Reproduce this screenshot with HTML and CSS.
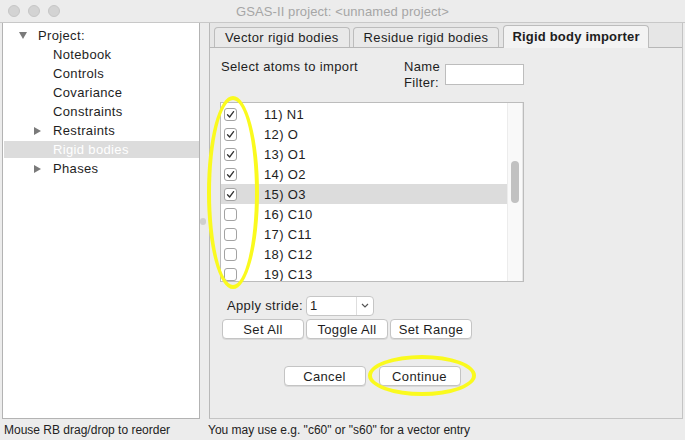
FILE: index.html
```html
<!DOCTYPE html>
<html>
<head>
<meta charset="utf-8">
<title>GSAS-II</title>
<link rel="stylesheet" href="styles.css">
</head>
<body>
<div class="window">
  <div class="titlebar">
    <div class="lights"><span class="light"></span><span class="light"></span><span class="light"></span></div>
    <div class="title">GSAS-II project: &lt;unnamed project&gt;</div>
    <div></div>
  </div>
  <div class="main">
    <div class="tree">
      <div class="node l0"><span class="twisty"><svg width="8" height="7" viewBox="0 0 8 7"><polygon points="0,0 8,0 4,7" fill="#7a7a7a"/></svg></span>Project:</div>
      <div class="node l1"><span class="twisty"></span>Notebook</div>
      <div class="node l1"><span class="twisty"></span>Controls</div>
      <div class="node l1"><span class="twisty"></span>Covariance</div>
      <div class="node l1"><span class="twisty"></span>Constraints</div>
      <div class="node l1"><span class="twisty"><svg width="7" height="8" viewBox="0 0 7 8"><polygon points="0,0 7,4 0,8" fill="#7a7a7a"/></svg></span>Restraints</div>
      <div class="node l1 selected"><span class="twisty"></span>Rigid bodies</div>
      <div class="node l1"><span class="twisty"><svg width="7" height="8" viewBox="0 0 7 8"><polygon points="0,0 7,4 0,8" fill="#7a7a7a"/></svg></span>Phases</div>
    </div>
    <div class="sash"><span class="sash-dot"></span></div>
    <div class="panel">
      <div class="tabs">
        <div class="tab">Vector rigid bodies</div>
        <div class="tab">Residue rigid bodies</div>
        <div class="tab active">Rigid body importer</div>
      </div>
      <div class="page">
        <div class="col">
          <div class="header">
            <div class="prompt">Select atoms to import</div>
            <div class="filter">
              <div class="filter-label">Name<br>Filter:</div>
              <div class="input"></div>
            </div>
          </div>
          <div class="list">
            <div class="rows">
              <div class="row"><span class="cb"><svg width="11" height="11" viewBox="0 0 11 11"><path d="M2.5 5.8 L4.6 8 L8.6 2.6" fill="none" stroke="#333" stroke-width="1.3" stroke-linecap="round" stroke-linejoin="round"/></svg></span><span class="lbl">11) N1</span></div>
              <div class="row"><span class="cb"><svg width="11" height="11" viewBox="0 0 11 11"><path d="M2.5 5.8 L4.6 8 L8.6 2.6" fill="none" stroke="#333" stroke-width="1.3" stroke-linecap="round" stroke-linejoin="round"/></svg></span><span class="lbl">12) O</span></div>
              <div class="row"><span class="cb"><svg width="11" height="11" viewBox="0 0 11 11"><path d="M2.5 5.8 L4.6 8 L8.6 2.6" fill="none" stroke="#333" stroke-width="1.3" stroke-linecap="round" stroke-linejoin="round"/></svg></span><span class="lbl">13) O1</span></div>
              <div class="row"><span class="cb"><svg width="11" height="11" viewBox="0 0 11 11"><path d="M2.5 5.8 L4.6 8 L8.6 2.6" fill="none" stroke="#333" stroke-width="1.3" stroke-linecap="round" stroke-linejoin="round"/></svg></span><span class="lbl">14) O2</span></div>
              <div class="row sel"><span class="cb"><svg width="11" height="11" viewBox="0 0 11 11"><path d="M2.5 5.8 L4.6 8 L8.6 2.6" fill="none" stroke="#333" stroke-width="1.3" stroke-linecap="round" stroke-linejoin="round"/></svg></span><span class="lbl">15) O3</span></div>
              <div class="row"><span class="cb"></span><span class="lbl">16) C10</span></div>
              <div class="row"><span class="cb"></span><span class="lbl">17) C11</span></div>
              <div class="row"><span class="cb"></span><span class="lbl">18) C12</span></div>
              <div class="row"><span class="cb"></span><span class="lbl">19) C13</span></div>
            </div>
            <div class="scrollbar"><div class="thumb"></div></div>
          </div>
          <div class="stride">
            <span>Apply stride:</span>
            <div class="combo"><span class="combo-val">1</span><span class="combo-arrow"><svg width="8" height="5" viewBox="0 0 8 5"><path d="M1 1 L4 4 L7 1" fill="none" stroke="#555" stroke-width="1.2"/></svg></span></div>
          </div>
          <div class="btnrow">
            <button class="btn">Set All</button>
            <button class="btn">Toggle All</button>
            <button class="btn">Set Range</button>
          </div>
          <div class="actions">
            <button class="btn">Cancel</button>
            <button class="btn">Continue</button>
          </div>
        </div>
      </div>
    </div>
  </div>
  <div class="status">
    <span class="field1">Mouse RB drag/drop to reorder</span>
    <span>You may use e.g. "c60" or "s60" for a vector entry</span>
  </div>
  <div class="mark mark-a"></div>
  <div class="mark mark-b"></div>
</div>
</body>
</html>
```
FILE: styles.css
```css
* { box-sizing: border-box; }
html, body { margin: 0; padding: 0; }
body {
  width: 685px;
  height: 440px;
  overflow: hidden;
  background: #ececec;
  font-family: "Liberation Sans", Arial, sans-serif;
  font-size: 13px;
  letter-spacing: 0.35px;
  color: #1e1e1e;
}
.window {
  position: relative;
  width: 685px;
  height: 440px;
  display: flex;
  flex-direction: column;
}
.titlebar {
  height: 23px;
  flex: none;
  display: grid;
  grid-template-columns: 1fr auto 1fr;
  align-items: center;
  background: #ececec;
  border-bottom: 1px solid #c8c8c8;
}
.lights { display: flex; gap: 8px; padding-left: 8px; }
.light {
  width: 12px; height: 12px; border-radius: 50%;
  background: #d3d3d3; border: 1px solid #c6c6c6;
}
.title { color: #a6a6a6; font-size: 13px; letter-spacing: 0.1px; }

.main {
  flex: 1;
  display: flex;
  min-height: 0;
}
.tree {
  width: 198px;
  margin-left: 2px;
  background: #fff;
  border: 1px solid #b3b3b3;
  border-top: none;
  padding-top: 4px;
  display: flex;
  flex-direction: column;
  gap: 2px;
}
.node {
  height: 17px;
  display: flex;
  align-items: center;
  margin-left: 1px;
  white-space: nowrap;
}
.node.l0 { padding-left: 15px; }
.node.l1 { padding-left: 30px; }
.twisty {
  width: 19px;
  display: flex;
  align-items: center;
  justify-content: flex-start;
}
.node.selected { background: #dcdcdc; color: #fff; }

.sash {
  width: 9px;
  display: flex;
  align-items: center;
  justify-content: flex-start;
}
.sash-dot {
  width: 6px; height: 7px;
  border-radius: 3px;
  background: #cfcfcf;
}
.panel {
  flex: 1;
  margin-right: 2px;
  border-left: 1px solid #b9b9b9;
  border-right: 1px solid #c4c4c4;
  border-bottom: 1px solid #c4c4c4;
  display: flex;
  flex-direction: column;
}
.tabs {
  height: 25px;
  flex: none;
  display: flex;
  align-items: flex-end;
  padding-left: 4px;
  gap: 3px;
  background: #e6e6e6;
  border-bottom: 1px solid #b7b7b7;
}
.tab {
  height: 20px;
  padding: 0 10px;
  display: flex;
  align-items: center;
  border: 1px solid #bcbcbc;
  border-bottom: none;
  border-radius: 4px 4px 0 0;
  background: #e9e9e9;
  color: #1e1e1e;
  white-space: nowrap;
}
.tab.active {
  height: 23px;
  margin-bottom: -1px;
  background: #f3f3f3;
  font-weight: bold;
  letter-spacing: 0.2px;
  padding: 0 8px 1px;
  margin-left: 1px;
}
.page {
  flex: 1;
  padding: 11px 0 0 10px;
}
.col { width: 304px; display: flex; flex-direction: column; }
.header {
  display: grid;
  grid-template-columns: 184px auto;
  align-items: start;
  height: 43px;
}
.prompt { line-height: 16px; padding-left: 1px; }
.filter { display: flex; gap: 5px; align-items: flex-start; }
.filter-label { line-height: 16px; }
.input {
  width: 79px; height: 21px;
  margin-top: 5px;
  background: #fff;
  border: 1px solid #bdbdbd;
}
.list {
  height: 180px;
  display: flex;
  background: #fff;
  border: 1px solid #bcbcbc;
  overflow: hidden;
}
.rows {
  flex: 1;
  padding-top: 1px;
  display: flex;
  flex-direction: column;
}
.row {
  height: 20px;
  flex: none;
  display: flex;
  align-items: center;
  padding-left: 3px;
}
.row.sel { background: #dcdcdc; }
.cb {
  width: 13px; height: 13px;
  flex: none;
  border: 1px solid #a3a3a3;
  border-radius: 3px;
  background: #fff;
  display: flex;
  align-items: center;
  justify-content: center;
}
.lbl { margin-left: 27px; }
.scrollbar {
  width: 16px;
  flex: none;
  background: #f9f9f9;
  border-left: 1px solid #ececec;
  border-right: 1px solid #e6e6e6;
  padding: 58px 0 0 3px;
}
.thumb {
  width: 8px; height: 42px;
  border-radius: 4px;
  background: #c1c1c1;
}
.stride {
  margin-top: 13px;
  padding-left: 7px;
  display: flex;
  align-items: center;
  gap: 3px;
  height: 21px;
}
.combo {
  width: 68px; height: 20px;
  display: flex;
  background: #fff;
  border: 1px solid #c6c6c6;
  border-radius: 4px;
}
.combo-val { flex: 1; padding-left: 3px; line-height: 18px; border-right: 1px solid #dedede; }
.combo-arrow { width: 16px; display: flex; align-items: center; justify-content: center; }
.btnrow {
  margin-top: 3px;
  padding-left: 2px;
  display: flex;
  gap: 2px;
}
.btn {
  width: 82px; height: 20px;
  padding: 0;
  font-family: "Liberation Sans", Arial, sans-serif;
  font-size: 13px;
  letter-spacing: 0.35px;
  color: #1e1e1e;
  background: #fff;
  border: 1px solid #c4c4c4;
  border-radius: 4px;
  box-shadow: 0 1px 0 rgba(0,0,0,0.08);
}
.actions {
  margin-top: 27px;
  display: flex;
  justify-content: center;
  gap: 13px;
}
.status {
  height: 21px;
  flex: none;
  display: flex;
  align-items: center;
  padding-left: 4px;
  font-size: 12px;
  letter-spacing: 0;
  color: #222;
  background: #ececec;
}
.field1 { width: 204px; }
.mark {
  position: absolute;
  border: 4px solid #fafa1e;
  border-radius: 50%;
}
.mark-a { left: 207px; top: 96px; width: 52px; height: 193px; }
.mark-b { left: 368px; top: 355px; width: 108px; height: 41px; }
```
